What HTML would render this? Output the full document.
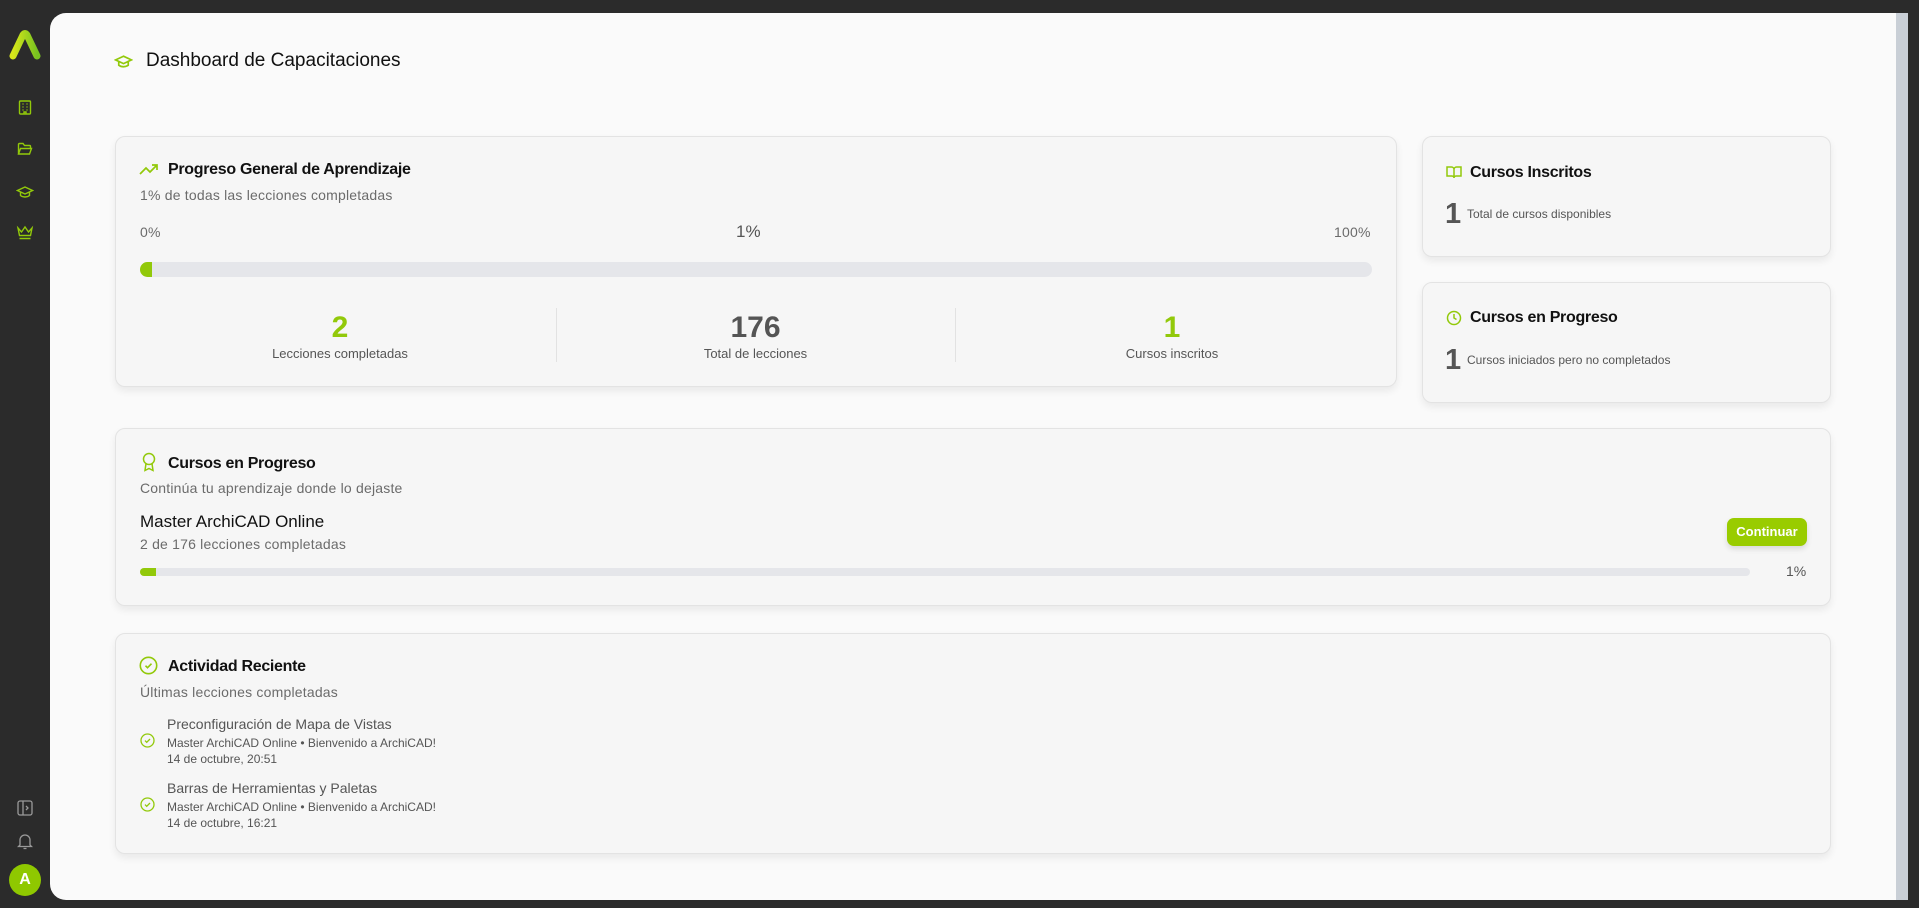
<!DOCTYPE html>
<html><head><meta charset="utf-8">
<style>
*{box-sizing:border-box;margin:0;padding:0}
body{width:1919px;height:908px;background:#2b2b2b;font-family:"Liberation Sans",sans-serif;position:relative;overflow:hidden;color:#111}
.abs{position:absolute}
.main{position:absolute;left:50px;top:13px;width:1846px;height:887px;background:#fafafa;border-radius:16px 0 0 16px}
.sb{position:absolute;left:1896px;top:13px;width:12px;height:887px;background:#c9cfd6}
.card{position:absolute;background:#f6f6f6;border:1px solid #e3e3e3;border-radius:10px;box-shadow:0 4px 8px rgba(0,0,0,0.07)}
.t{position:absolute;white-space:nowrap}
.h{font-size:16px;font-weight:bold;color:#111;letter-spacing:-0.3px}
.sub{font-size:14px;color:#6b6b6b;letter-spacing:0.2px}
.g{color:#92c90a}
svg{position:absolute}
</style></head><body>
<div class="sb"></div>
<div class="main"></div>
<!-- sidebar -->
<svg style="left:9px;top:30px" width="32" height="30" viewBox="0 0 32 30"><defs><linearGradient id="lg" x1="0" x2="1"><stop offset="0" stop-color="#d8e81a"/><stop offset="1" stop-color="#78c320"/></linearGradient></defs><path d="M4 26 L14 5 Q16 2 18 5 L28 26" stroke="url(#lg)" stroke-width="7" fill="none" stroke-linecap="round" stroke-linejoin="round"/></svg>
<svg style="left:18px;top:100px" width="14" height="15" viewBox="0 0 14 15" fill="none" stroke="#92c90a" stroke-width="1.4"><rect x="1.5" y="1" width="11" height="13" rx="1"/><path d="M4.5 4h1M8.5 4h1M4.5 7h1M8.5 7h1M4.5 10h1M8.5 10h1M6 14v-2h2v2"/></svg>
<svg style="left:17px;top:142px" width="16" height="14" viewBox="0 0 16 14" fill="none" stroke="#92c90a" stroke-width="1.4"><path d="M1.5 12V2.5a1 1 0 011-1h3.5l1.5 2h5a1 1 0 011 1V6M1.5 12l2-5.5h11l-2 5.5z"/></svg>
<svg style="left:16px;top:185px" width="18" height="14" viewBox="0 0 18 14" fill="none" stroke="#92c90a" stroke-width="1.4"><path d="M9 2L1.5 5.5 9 9l7.5-3.5zM4.5 7v3.5c2.5 2 6.5 2 9 0V7"/></svg>
<svg style="left:16px;top:225px" width="18" height="15" viewBox="0 0 18 15" fill="none" stroke="#92c90a" stroke-width="1.4"><path d="M2 3l3.5 4L9 2l3.5 5L16 3l-1.5 7.5h-11zM3.5 13.5h11"/></svg>
<svg style="left:17px;top:800px" width="16" height="16" viewBox="0 0 16 16" fill="none" stroke="#9a9a9a" stroke-width="1.3"><rect x="1" y="1" width="14" height="14" rx="2"/><path d="M6 1v14M9 6l2 2-2 2"/></svg>
<svg style="left:17px;top:833px" width="16" height="17" viewBox="0 0 16 17" fill="none" stroke="#9a9a9a" stroke-width="1.3"><path d="M3 12V7a5 5 0 0110 0v5l1.5 1.5h-13zM6.5 15.5h3"/></svg>
<div class="abs" style="left:9px;top:864px;width:32px;height:32px;border-radius:50%;background:#8fc800;color:#fff;font-weight:bold;font-size:16px;text-align:center;line-height:32px">A</div>

<!-- header -->
<svg style="left:114px;top:54px" width="19" height="15" viewBox="0 0 18 14" fill="none" stroke="#92c90a" stroke-width="1.6"><path d="M9 2L1.5 5.5 9 9l7.5-3.5zM4.5 7v3.5c2.5 2 6.5 2 9 0V7"/></svg>
<div class="t" style="left:146px;top:50px;font-size:19px;color:#111">Dashboard de Capacitaciones</div>

<!-- card 1 -->
<div class="card" style="left:115px;top:136px;width:1282px;height:251px"></div>
<svg style="left:139px;top:163px" width="20" height="13" viewBox="0 0 20 13" fill="none" stroke="#92c90a" stroke-width="1.7"><path d="M1 11l6-6 4 4 7-7M13 2h5v5"/></svg>
<div class="t h" style="left:168px;top:161px">Progreso General de Aprendizaje</div>
<div class="t sub" style="left:140px;top:187px">1% de todas las lecciones completadas</div>
<div class="t sub" style="left:140px;top:224px">0%</div>
<div class="t" style="left:736px;top:222px;font-size:17px;color:#555">1%</div>
<div class="t sub" style="left:1334px;top:224px">100%</div>
<div class="abs" style="left:140px;top:262px;width:1232px;height:15px;background:#e5e6ea;border-radius:8px;overflow:hidden"><div style="width:12px;height:15px;background:#92c90a"></div></div>
<div class="abs" style="left:556px;top:308px;width:1px;height:54px;background:#e2e2e2"></div>
<div class="abs" style="left:955px;top:308px;width:1px;height:54px;background:#e2e2e2"></div>
<div class="t g" style="left:140px;width:400px;text-align:center;top:311px;font-size:30px;font-weight:bold">2</div>
<div class="t" style="left:140px;width:400px;text-align:center;top:346px;font-size:13px;color:#555">Lecciones completadas</div>
<div class="t" style="left:556px;width:399px;text-align:center;top:311px;font-size:30px;font-weight:bold;color:#555">176</div>
<div class="t" style="left:556px;width:399px;text-align:center;top:346px;font-size:13px;color:#555">Total de lecciones</div>
<div class="t g" style="left:972px;width:400px;text-align:center;top:311px;font-size:30px;font-weight:bold">1</div>
<div class="t" style="left:972px;width:400px;text-align:center;top:346px;font-size:13px;color:#555">Cursos inscritos</div>

<!-- right cards -->
<div class="card" style="left:1422px;top:136px;width:409px;height:121px"></div>
<svg style="left:1446px;top:165px" width="16" height="15" viewBox="0 0 16 15" fill="none" stroke="#92c90a" stroke-width="1.5"><path d="M1 2h4.5a2.5 2.5 0 012.5 2.5V13a2 2 0 00-2-2H1zM15 2h-4.5A2.5 2.5 0 008 4.5V13a2 2 0 012-2h5z"/></svg>
<div class="t h" style="left:1470px;top:164px">Cursos Inscritos</div>
<div class="t" style="left:1445px;top:198px;font-size:29px;font-weight:bold;color:#555">1</div>
<div class="t" style="left:1467px;top:207px;font-size:12px;color:#555">Total de cursos disponibles</div>

<div class="card" style="left:1422px;top:282px;width:409px;height:121px"></div>
<svg style="left:1446px;top:310px" width="16" height="16" viewBox="0 0 16 16" fill="none" stroke="#92c90a" stroke-width="1.5"><circle cx="8" cy="8" r="6.5"/><path d="M8 4v4l2.5 1.5"/></svg>
<div class="t h" style="left:1470px;top:309px">Cursos en Progreso</div>
<div class="t" style="left:1445px;top:344px;font-size:29px;font-weight:bold;color:#555">1</div>
<div class="t" style="left:1467px;top:353px;font-size:12px;color:#555">Cursos iniciados pero no completados</div>

<!-- progress card -->
<div class="card" style="left:115px;top:428px;width:1716px;height:178px"></div>
<svg style="left:141px;top:452px" width="16" height="20" viewBox="0 0 16 20" fill="none" stroke="#92c90a" stroke-width="1.5"><circle cx="8" cy="7" r="5.5"/><path d="M5 11.5L4 18.5l4-2 4 2-1-7"/></svg>
<div class="t h" style="left:168px;top:455px">Cursos en Progreso</div>
<div class="t sub" style="left:140px;top:480px">Continúa tu aprendizaje donde lo dejaste</div>
<div class="t" style="left:140px;top:512px;font-size:17px;color:#111">Master ArchiCAD Online</div>
<div class="t sub" style="left:140px;top:536px">2 de 176 lecciones completadas</div>
<div class="abs" style="left:1727px;top:518px;width:80px;height:28px;background:#99cc00;border-radius:7px;color:#fff;font-weight:bold;font-size:13px;text-align:center;line-height:28px;box-shadow:0 3px 6px rgba(0,0,0,0.12)">Continuar</div>
<div class="abs" style="left:140px;top:568px;width:1610px;height:8px;background:#e5e6ea;border-radius:4px;overflow:hidden"><div style="width:16px;height:8px;background:#92c90a"></div></div>
<div class="t" style="left:1786px;top:563px;font-size:14px;color:#555">1%</div>

<!-- activity -->
<div class="card" style="left:115px;top:633px;width:1716px;height:221px"></div>
<svg style="left:139px;top:656px" width="19" height="19" viewBox="0 0 19 19" fill="none" stroke="#92c90a" stroke-width="1.6"><circle cx="9.5" cy="9.5" r="8.2"/><path d="M6.5 9.7l2 2 4-4"/></svg>
<div class="t h" style="left:168px;top:658px">Actividad Reciente</div>
<div class="t sub" style="left:140px;top:684px">Últimas lecciones completadas</div>
<svg style="left:140px;top:733px" width="15" height="15" viewBox="0 0 15 15" fill="none" stroke="#92c90a" stroke-width="1.3"><circle cx="7.5" cy="7.5" r="6.5"/><path d="M5 7.6l1.7 1.7 3.3-3.3"/></svg>
<div class="t" style="left:167px;top:716px;font-size:14px;color:#555">Preconfiguración de Mapa de Vistas</div>
<div class="t" style="left:167px;top:736px;font-size:12px;color:#555">Master ArchiCAD Online • Bienvenido a ArchiCAD!</div>
<div class="t" style="left:167px;top:752px;font-size:12px;color:#555">14 de octubre, 20:51</div>
<svg style="left:140px;top:797px" width="15" height="15" viewBox="0 0 15 15" fill="none" stroke="#92c90a" stroke-width="1.3"><circle cx="7.5" cy="7.5" r="6.5"/><path d="M5 7.6l1.7 1.7 3.3-3.3"/></svg>
<div class="t" style="left:167px;top:780px;font-size:14px;color:#555">Barras de Herramientas y Paletas</div>
<div class="t" style="left:167px;top:800px;font-size:12px;color:#555">Master ArchiCAD Online • Bienvenido a ArchiCAD!</div>
<div class="t" style="left:167px;top:816px;font-size:12px;color:#555">14 de octubre, 16:21</div>
</body></html>
